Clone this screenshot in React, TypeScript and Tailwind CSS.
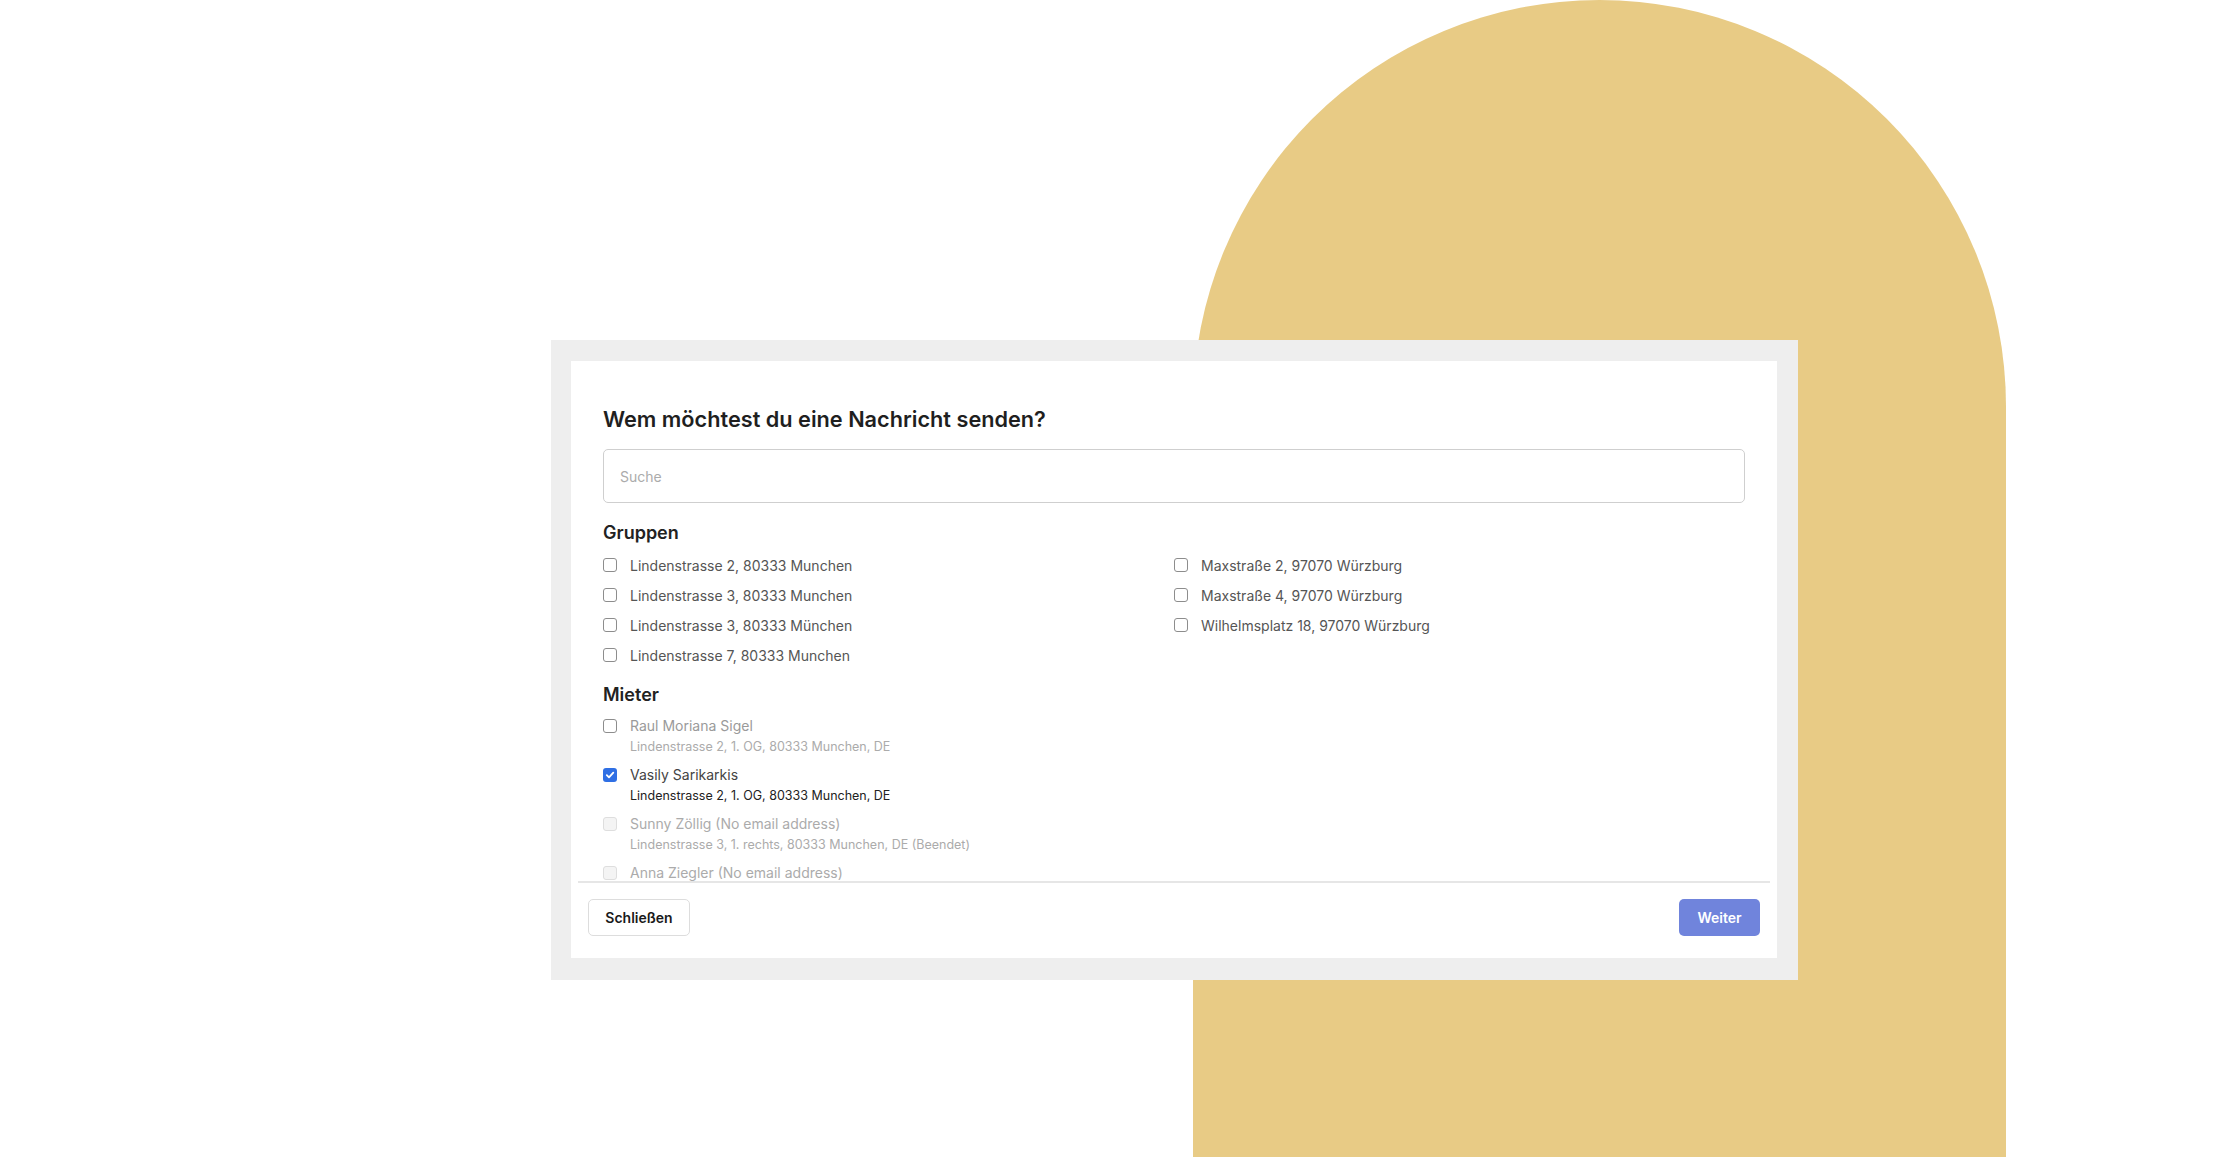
import React from "react";

type Row = { label: string };

const groupsLeft = [
  "Lindenstrasse 2, 80333 Munchen",
  "Lindenstrasse 3, 80333 Munchen",
  "Lindenstrasse 3, 80333 München",
  "Lindenstrasse 7, 80333 Munchen",
];
const groupsRight = [
  "Maxstraße 2, 97070 Würzburg",
  "Maxstraße 4, 97070 Würzburg",
  "Wilhelmsplatz 18, 97070 Würzburg",
];

function Box({ state }: { state: "empty" | "checked" | "disabled" }) {
  if (state === "checked") {
    return (
      <span className="flex h-[14px] w-[14px] shrink-0 items-center justify-center rounded-[3px] bg-[#2f6fe4]">
        <svg width="10" height="10" viewBox="0 0 10 10" fill="none">
          <path d="M1.8 5.2 L4 7.4 L8.3 2.6" stroke="white" strokeWidth="1.8" strokeLinecap="round" strokeLinejoin="round" />
        </svg>
      </span>
    );
  }
  if (state === "disabled") {
    return <span className="h-[14px] w-[14px] shrink-0 rounded-[3px] border border-[#dedede] bg-[#f4f4f4]" />;
  }
  return <span className="h-[14px] w-[14px] shrink-0 rounded-[3px] border-[1.5px] border-[#8d8d8d] bg-white" />;
}

function GroupRow({ label }: Row) {
  return (
    <div className="flex h-[30px] items-center gap-[13px]">
      <Box state="empty" />
      <span className="text-[14px] text-[#555555]">{label}</span>
    </div>
  );
}

function Tenant({
  name,
  address,
  state,
  nameColor,
  addrColor,
}: {
  name: string;
  address?: string;
  state: "empty" | "checked" | "disabled";
  nameColor: string;
  addrColor: string;
}) {
  return (
    <div className="mb-[9px] flex gap-[13px]">
      <div className="flex h-[20px] items-center">
        <Box state={state} />
      </div>
      <div className="flex flex-col">
        <span className={`text-[14px] leading-[20px] ${nameColor}`}>{name}</span>
        {address && (
          <span className={`mt-[2px] text-[12.5px] leading-[18px] ${addrColor}`}>{address}</span>
        )}
      </div>
    </div>
  );
}

export default function App() {
  return (
    <div
      className="relative h-[1160px] w-[2220px] overflow-hidden bg-white"
      style={{ fontFamily: "Inter, 'Liberation Sans', sans-serif" }}
    >
      <div className="absolute left-[1193px] top-0 h-[1157px] w-[813px] rounded-t-[407px] bg-[#e8cb85]" />

      <div className="relative z-10 ml-[551px] mt-[340px] w-[1247px] bg-[#eeeeee] pb-[22px] pl-[20px] pr-[21px] pt-[21px]">
        <div className="flex w-[1206px] flex-col bg-white">
          <div className="px-[32px] pt-[44px]">
            <h1 className="text-[21.7px] font-semibold leading-[28px] text-[#1f1f1f]">
              Wem möchtest du eine Nachricht senden?
            </h1>
            <div className="mt-[16px] flex h-[54px] items-center rounded-[5px] border border-[#cfcfcf] px-[16px]">
              <span className="text-[14px] text-[#ababab]">Suche</span>
            </div>
          </div>

          <div className="h-[378px] overflow-hidden px-[32px] pt-[18px]">
            <h2 className="text-[18px] font-semibold leading-[24px] text-[#222222]">Gruppen</h2>
            <div className="mt-[5px] grid grid-cols-2">
              <div className="flex flex-col">
                {groupsLeft.map((g) => (
                  <GroupRow key={g} label={g} />
                ))}
              </div>
              <div className="flex flex-col">
                {groupsRight.map((g) => (
                  <GroupRow key={g} label={g} />
                ))}
              </div>
            </div>

            <h2 className="mt-[13px] text-[18px] font-semibold leading-[24px] text-[#222222]">Mieter</h2>
            <div className="mt-[9px] flex flex-col">
              <Tenant
                name="Raul Moriana Sigel"
                address="Lindenstrasse 2, 1. OG, 80333 Munchen, DE"
                state="empty"
                nameColor="text-[#9a9a9a]"
                addrColor="text-[#ababab]"
              />
              <Tenant
                name="Vasily Sarikarkis"
                address="Lindenstrasse 2, 1. OG, 80333 Munchen, DE"
                state="checked"
                nameColor="text-[#444444]"
                addrColor="text-[#222222]"
              />
              <Tenant
                name="Sunny Zöllig (No email address)"
                address="Lindenstrasse 3, 1. rechts, 80333 Munchen, DE (Beendet)"
                state="disabled"
                nameColor="text-[#ababab]"
                addrColor="text-[#ababab]"
              />
              <Tenant
                name="Anna Ziegler (No email address)"
                state="disabled"
                nameColor="text-[#ababab]"
                addrColor="text-[#ababab]"
              />
            </div>
          </div>

          <div className="mx-[7px] h-[2px] bg-[#e6e6e6]" />

          <div className="flex items-center justify-between px-[17px] pb-[22px] pt-[16px]">
            <button className="h-[37px] w-[102px] rounded-[5px] border border-[#dddddd] bg-white text-[14px] font-semibold text-[#1a1a1a]">
              Schließen
            </button>
            <button className="h-[37px] w-[81px] rounded-[5px] bg-[#7084dc] text-[14px] font-semibold text-white">
              Weiter
            </button>
          </div>
        </div>
      </div>
    </div>
  );
}
